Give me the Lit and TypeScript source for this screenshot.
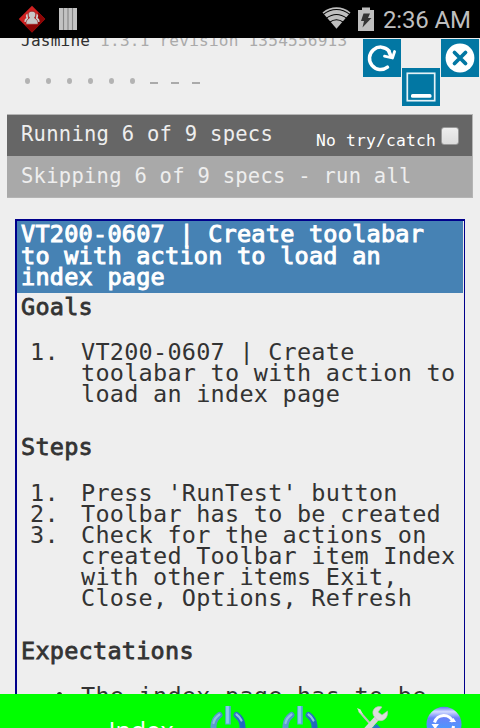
import { LitElement, html, css } from "lit";
import { customElement } from "lit/decorators.js";

const specs = {
  title: ["VT200-0607 | Create toolabar", "to with action to load an", "index page"],
  goals: [["VT200-0607 | Create", "toolabar to with action to", "load an index page"]],
  steps: [
    ["Press 'RunTest' button"],
    ["Toolbar has to be created"],
    ["Check for the actions on", "created Toolbar item Index", "with other items Exit,", "Close, Options, Refresh"],
  ],
};

@customElement("status-bar")
class StatusBar extends LitElement {
  static styles = css`
    :host { display: flex; height: 38px; background: #000; align-items: center; color: #bebebe; position: relative; z-index: 2; }
    svg { display: block; flex: none; }
    .alert { margin-left: 18px; }
    .bars { margin-left: 13px; }
    .wifi { margin: -2px 0 0 auto; }
    .battery { margin: -1px 0 0 7px; }
    .clock { font: 24px/38px Roboto, sans-serif; letter-spacing: -.15px; width: 87px; margin: 2px 10px 0 9px; white-space: nowrap; }
  `;
  render() {
    return html`
      <svg class="alert" width="28" height="28" viewBox="0 0 28 28">
        <path d="M14 .8 27.2 14 14 27.6 .8 14Z" fill="#cf2020" />
        <path d="M27.2 14 14 27.6 7 20.5 19 19 20 7Z" fill="#8c0505" />
        <path d="M9.5 8.5c-2 1-2 3-1 4.500-2 1-2.200 2.500-2 4h4zM18.500 8.500c2 1 2 3 1 4.500 2 1 2.200 2.500 2 4h-4z" fill="#ccc" />
        <path d="M14 6.200c-3 0-4.200 2-3.700 4 .2 1.500 1 2 1.200 2.800-3 1.500-3.800 4-3.500 6.300h12c.3-2.300-.5-4.800-3.500-6.300.2-.8 1-1.300 1.200-2.800.5-2-.7-4-3.700-4z" fill="#c8c8c8" stroke="#8c1515" stroke-width=".7" />
      </svg>
      <svg class="bars" width="18" height="22" viewBox="0 0 18 22">
        <path d="M0 0h18v22H0z" fill="#c2c2c2" />
        <path d="M4.500 0v22M9 0v22M13.500 0v22" stroke="#858585" stroke-width="1.100" />
      </svg>
      <svg class="wifi" width="29" height="22" viewBox="0 0 29 22">
        <path d="M.5 5.400C9-1.400 20-1.400 28.500 5.400L14.500 21.800Z" fill="#bebebe" />
        <path d="M1 7.600C9.500.8 19.500.8 28 7.600M4.200 11.400c6.500-4.900 14.100-4.900 20.600 0M7.600 15.200c4.300-3 9.500-3 13.800 0" fill="none" stroke="#000" stroke-width="1.050" />
      </svg>
      <svg class="battery" width="16" height="24" viewBox="0 0 16 24">
        <path d="M4 .5h8v2.500h4V24H0V3h4z" fill="#bebebe" />
        <path d="M5.500 6.500h6.500L10 11h3.500L4.500 20.500l1.500-6.500H3z" fill="#333" />
      </svg>
      <div class="clock">2:36 AM</div>
    `;
  }
}

@customElement("window-controls")
class WindowControls extends LitElement {
  static styles = css`
    :host { position: absolute; top: 39px; right: 1px; display: flex; gap: 1px; z-index: 3; }
    .btn { width: 38px; height: 38px; background: #0277a3; }
    .low { margin-top: 29px; }
    svg { display: block; }
  `;
  render() {
    return html`
      <div class="btn"><svg width="38" height="38" viewBox="0 0 38 38" fill="none" stroke="#fff">
        <path d="M24.500 28.200A11.200 11.200 0 1 1 26 11.800" stroke-width="3.500" stroke-linecap="round" />
        <path d="M21.500 17.200 29.500 19 31.600 12.500" stroke-width="2.800" stroke-linecap="round" stroke-linejoin="round" />
        <path d="M25.500 11.500l3 7" stroke-width="3.600" />
      </svg></div>
      <div class="btn low"><svg width="38" height="38" viewBox="0 0 38 38">
        <rect x="5.300" y="5.300" width="27.400" height="27.400" fill="none" stroke="#e4f2f7" stroke-width="1.700" />
        <rect x="9" y="26" width="20.500" height="3.800" rx="1.500" fill="#fff" />
      </svg></div>
      <div class="btn"><svg width="38" height="38" viewBox="0 0 38 38">
        <circle cx="19" cy="19" r="14.400" fill="#fff" />
        <path d="M13.500 13.500l11 11M24.500 13.500l-11 11" stroke="#0277a3" stroke-width="3.800" stroke-linecap="round" />
      </svg></div>
    `;
  }
}

@customElement("bottom-toolbar")
class BottomToolbar extends LitElement {
  static styles = css`
    :host { position: absolute; left: 0; right: 0; bottom: 0; height: 34px; background: #0f0; overflow: hidden; display: flex; z-index: 2; }
    .label { width: 72px; margin: 20px 0 0 105px; text-align: center; font: 25.200px/32px "Open Sans", "Noto Sans", sans-serif; color: #fff; }
    .cell { width: 72px; height: 48px; flex: none; padding-top: 12px; box-sizing: border-box; }
    .cells { display: flex; margin-left: 15px; }
    svg { display: block; margin: 0 auto; }
  `;
  power() {
    return html`<div class="cell"><svg width="36" height="36" viewBox="0 0 36 36" fill="none" stroke-linecap="round">
      <defs><linearGradient id="p" x1="0" y1="0" x2="1" y2="0"><stop offset="0" stop-color="#5b9fce" /><stop offset="1" stop-color="#2068c0" /></linearGradient></defs>
      <path d="M9.500 9A14.500 14.500 0 1 0 26.500 9" stroke="url(#p)" stroke-width="6" />
      <path d="M9.500 8.500Q4.500 12 3.500 17M26.500 8.500q3.500 2.500 5 6" stroke="#8fbfe2" stroke-width="2.200" />
      <path d="M18 0v18.500" stroke="#58a8dc" stroke-width="5.500" stroke-linecap="butt" />
      <path d="M17.500 0v17.500" stroke="#8ccaea" stroke-width="2.800" stroke-linecap="butt" />
    </svg></div>`;
  }
  render() {
    return html`
      <div class="label">Index</div>
      <div class="cells">
        ${this.power()}${this.power()}
        <div class="cell"><svg width="36" height="36" viewBox="0 0 36 36" fill="none">
          <path d="M5 5 19 21" stroke="#bfc3bd" stroke-width="2" />
          <path d="M3 2l3.500 1.500 2.500 5L5 6z" fill="#dedede" />
          <path d="M20 20l11 12" stroke="#2379c4" stroke-width="7" />
          <path d="M5 32 24 11" stroke="#d7d9d7" stroke-width="5.500" />
          <path d="M28 1c-6-2-11 3-8.500 8.500L23 14c6 2.500 11.500-2 10.500-9L28 9l-4-3z" fill="#dcdddc" stroke="#b9bdb9" stroke-width=".6" />
        </svg></div>
        <div class="cell"><svg width="36" height="36" viewBox="0 0 36 36" fill="none">
          <defs><linearGradient id="g" x1="0" y1="0" x2="0" y2="1"><stop offset="0" stop-color="#5d72f0" /><stop offset=".14" stop-color="#d3dcff" /><stop offset=".32" stop-color="#6a82f8" /><stop offset=".7" stop-color="#459cff" /></linearGradient></defs>
          <circle cx="18" cy="18.300" r="17.500" fill="url(#g)" />
          <path d="M8.500 16.500a9.700 9.700 0 0 1 18.500-.5M27.500 20a9.500 9.500 0 0 1-18.500 2" stroke="#fff" stroke-width="3" />
          <path d="M23 16h7l-2.500-4zM5.500 18h7.500l-4 5z" fill="#fff" />
        </svg></div>
      </div>
    `;
  }
}

@customElement("app-root")
class AppRoot extends LitElement {
  static styles = css`
    :host { display: block; position: relative; width: 480px; height: 728px; overflow: hidden; background: #eee; color: #333; font-family: "DejaVu Sans Mono", "Liberation Mono", monospace; white-space: pre; }
    .version { height: 20px; margin: -7px 0 0 21px; font-size: 16.1px; letter-spacing: .2px; line-height: 20px; color: #aaa; }
    .version b { font-weight: 400; color: #303030; }
    .results { display: flex; height: 24px; margin: 18px 0 0 17px; }
    .mark { width: 21px; height: 24px; display: grid; place-items: center; }
    .dot { width: 5px; height: 6px; border-radius: 50%; background: #b3b3b3; }
    .dash { width: 8px; height: 2px; margin: 3px 0 0 1px; background: #aaa; }
    .banner { margin: 21px 7px 0; color: #eee; font-size: 20.5px; letter-spacing: .26px; border: 1px solid #b4b4b4; border-width: 1px 1px 1px 0; }
    .running { height: 41px; line-height: 38px; padding-left: 14px; background: #666; display: flex; }
    .skipping { height: 41px; line-height: 40px; padding-left: 14px; background: #a9a9a9; }
    .catch { margin-left: auto; display: flex; font-size: 16.300px; letter-spacing: .19px; color: #fff; padding-right: 13px; }
    .catch span { margin-top: 7px; height: 34px; }
    .check { width: 18px; height: 18px; box-sizing: border-box; margin: 12px 0 0 5px; border: 1px solid #999; border-radius: 3px; background: linear-gradient(#eee, #ddd); }
    .spec { margin: 21px 15px 0; height: 520px; border: solid #00008b; border-width: 2px 1px 0 2px; font-size: 23.5px; letter-spacing: .25px; line-height: 21px; }
    .title { box-sizing: border-box; height: 72px; padding: 3px 0 0 4px; margin-right: 1px; background: #4682b4; color: #fff; line-height: 21.600px; -webkit-text-stroke: 1px currentColor; }
    h3 { font-size: inherit; font-weight: 400; -webkit-text-stroke: .8px currentColor; line-height: 21px; margin: 32px 0 0 4px; }
    h3.first { margin-top: 4px; }
    ol, ul { margin: 25px 0 0; padding: 0; list-style: none; }
    .goals { margin-top: 24px; }
    .expect { margin-top: 24px; }
    li { display: flex; }
    .num { width: 64px; flex: none; box-sizing: border-box; padding-left: 13px; }
    .bullet { width: 5px; height: 5px; border-radius: 50%; background: #333; margin: 6px 19px 0 40px; }
  `;
  list(items: string[][], cls = "") {
    return html`<ol class=${cls}>${items.map((lines, i) => html`<li><span class="num">${i + 1}.</span><div>${lines.map((l) => html`<div>${l}</div>`)}</div></li>`)}</ol>`;
  }
  render() {
    return html`<status-bar></status-bar><div class="version"><b>Jasmine</b> 1.3.1 revision 1354556913</div><div class="results">${Array.from({ length: 9 }, (_, i) => html`<div class="mark"><div class=${i < 6 ? "dot" : "dash"}></div></div>`)}</div><div class="banner"><div class="running">Running 6 of 9 specs<div class="catch"><span>No try/catch</span><div class="check"></div></div></div><div class="skipping">Skipping 6 of 9 specs - run all</div></div><div class="spec"><div class="title">${specs.title.map((l) => html`<div>${l}</div>`)}</div><h3 class="first">Goals</h3>${this.list(specs.goals, "goals")}<h3>Steps</h3>${this.list(specs.steps)}<h3>Expectations</h3><ul class="expect"><li><div class="bullet"></div>The index page has to be</li></ul></div><window-controls></window-controls><bottom-toolbar></bottom-toolbar>`;
  }
}
